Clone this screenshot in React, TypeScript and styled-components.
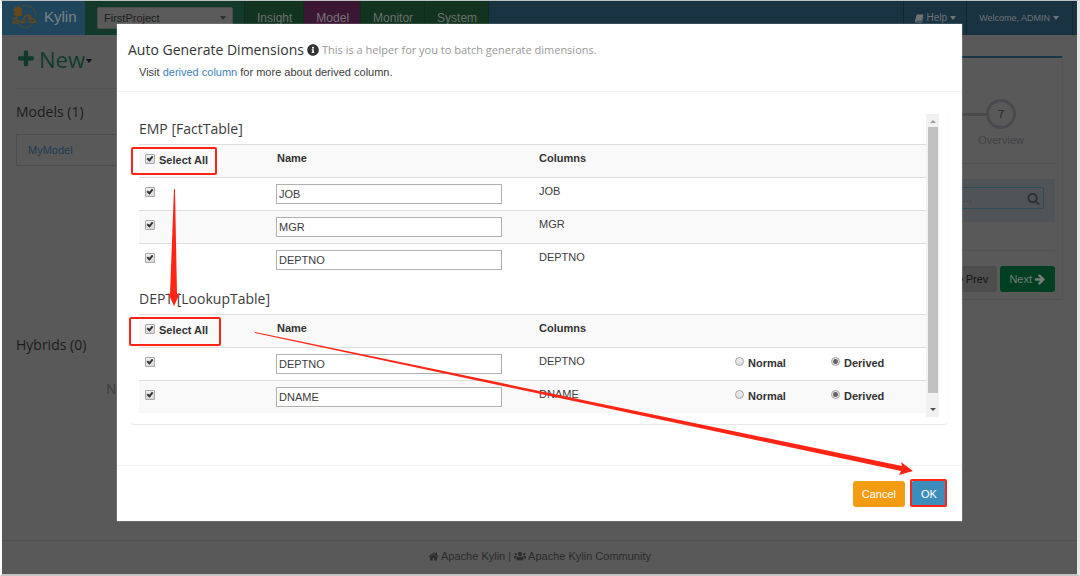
import React from 'react';
import styled, { createGlobalStyle, css } from 'styled-components';
import { FaInfoCircle, FaUsers } from 'react-icons/fa';

const sans = '"Liberation Sans", Arial, sans-serif';
const humanist = '"Open Sans", "Noto Sans", sans-serif';

const GlobalStyle = createGlobalStyle`
  *, *::before, *::after { box-sizing: border-box; }
  html, body { margin: 0; background: #f4f4f4; }
  body { font: 11px/16px ${sans}; color: #3c3c3c; overflow: hidden; }
  button, input, select { font: inherit; margin: 0; }
  h1, h2, p { margin: 0; font-weight: normal; }
  a { text-decoration: none; color: inherit; }
  svg { display: block; flex: none; }
`;

const Page = styled.div`
  display: flex;
  flex-direction: column;
  min-height: 100vh;
  border: solid #fff;
  border-width: 1px 3px 2px 2px;
  border-top-color: #bcc2c2;
  border-bottom-color: #c4c4c4;
  border-right-color: #e6e6e6;
  background: #595959;
`;

const TopBar = styled.header`
  display: flex;
  height: 34px;
  background: #1a3342;
  color: #6f7473;
`;

const Brand = styled.a`
  display: flex;
  align-items: center;
  gap: 6px;
  width: 83px;
  padding: 0 0 2px 9px;
  background: #1f465d;
  color: #7c8285;
  font-size: 15px;
`;

const ProjectArea = styled.div`
  display: flex;
  align-items: center;
  width: 160px;
  padding: 0 11px 0 12px;
  background: #12392a;
  border-right: 1px solid #0e2c20;
`;

const ProjectPicker = styled.div`
  position: relative;
  flex: 1;
`;

const ProjectSelect = styled.select`
  appearance: none;
  display: block;
  width: 100%;
  height: 22px;
  padding: 0 20px 0 6px;
  border: 1px solid #4a4f4c;
  border-radius: 2px;
  background: #5a5a5a;
  color: #1d1d1d;
`;

const Caret = styled.span`
  width: 6px;
  border: 3px solid transparent;
  border-top: 4px solid currentColor;
  border-bottom: 0;

  ${ProjectPicker} & {
    position: absolute;
    right: 7px;
    top: 9px;
    color: #303030;
    pointer-events: none;
  }
`;

const Tab = styled.a<{ $active?: boolean }>`
  display: flex;
  align-items: center;
  padding: 0 11px 0 12px;
  border-right: 1px solid #0f2d1e;
  background: ${(p) => (p.$active ? '#3a1733' : '#12331f')};
  color: ${(p) => (p.$active ? '#7a757a' : '#6b716e')};
  font-size: 12px;
`;

const UserMenu = styled.nav`
  display: flex;
  margin-left: auto;
  padding-right: 4px;
`;

const UserLink = styled.a`
  display: flex;
  align-items: center;
  gap: 3px;
  padding: 0 10px;
  border-left: 1px solid #122632;
  color: #6f7477;
  font-size: 10px;

  &:last-child {
    padding: 0 13px 0 12px;
    border-right: 1px solid #122632;
    font-size: 9px;
  }
`;

const Main = styled.main`
  display: flex;
  flex: 1;
  gap: 16px;
  padding: 0 14px;
`;

const Sidebar = styled.aside`
  width: 246px;
`;

const NewButton = styled.button`
  display: flex;
  align-items: center;
  gap: 3px;
  width: 100%;
  height: 54px;
  padding: 0 0 6px;
  border: 0;
  border-bottom: 1px solid #535353;
  background: none;
  color: #103b2a;
  font: 22px/30px ${humanist};

  ${Caret} { margin: 5px 0 0 -2px; color: #111; }
`;

const SideTitle = styled.h2`
  padding: 13px 0 12px;
  color: #1c1c1c;
  font: 14px/20px ${humanist};
`;

const ModelList = styled.div`
  min-height: 233px;
`;

const ModelLink = styled.a`
  display: block;
  padding: 7px 11px;
  border: 1px solid #4d4d4d;
  color: #1e3b52;
`;

const EmptyNote = styled.p`
  padding-top: 14px;
  text-align: center;
  color: #404040;
  font-size: 14px;
`;

const Card = styled.section`
  flex: 1;
  align-self: flex-start;
  margin-top: 21px;
  padding: 0 7px 7px;
  border-top: 2px solid #173748;
  border-right: 1px solid #545454;
  border-bottom: 1px solid #525252;
  border-radius: 2px;
`;

const Steps = styled.div`
  display: flex;
  justify-content: flex-end;
  height: 106px;
  padding: 41px 31px 0 0;
  border-bottom: 1px solid #525252;
`;

const StepLine = styled.div`
  flex: 1;
  height: 3px;
  margin: 14px -9px 0 0;
  background: #494a4c;
`;

const Step = styled.div`
  display: flex;
  flex-direction: column;
  align-items: center;
  gap: 3px;
  color: #404244;
`;

const StepNumber = styled.span`
  display: grid;
  place-items: center;
  width: 30px;
  height: 30px;
  border: 3px solid #484a4d;
  border-radius: 50%;
  color: #222;
`;

const FilterBar = styled.div`
  display: flex;
  justify-content: flex-end;
  margin: 15px 0 28px;
  padding: 8px 11px 13px;
  background: #515457;
`;

const SearchField = styled.label`
  display: flex;
  align-items: center;
  justify-content: space-between;
  width: 114px;
  height: 22px;
  padding: 0 3px 0 4px;
  border: 1px solid #2c4c5c;
  border-radius: 2px;
  color: #303030;

  input {
    width: 50px;
    padding: 0;
    border: 0;
    background: none;
  }
  input::placeholder { color: #3c3c3c; }
`;

const StepActions = styled.div`
  display: flex;
  justify-content: flex-end;
  gap: 3px;
  padding-top: 15px;
  border-top: 1px solid #525252;
`;

const Button = styled.button<{ $tone: 'plain' | 'next' | 'warning' | 'primary' }>`
  display: flex;
  align-items: center;
  justify-content: center;
  gap: 2px;
  min-width: 36px;
  height: 26px;
  padding: 0 9px;
  border: 0;
  border-radius: 3px;
  ${(p) =>
    ({
      plain: css`background: #4d4d4d; color: #141414;`,
      next: css`background: #003f22; color: #747d78;`,
      warning: css`background: #f39c12; color: #fff;`,
      primary: css`background: #3c8dbc; color: #fff;`,
    })[p.$tone]}
`;

const PageFooter = styled.footer`
  display: flex;
  justify-content: center;
  gap: 3px;
  height: 34px;
  padding-top: 7px;
  border-top: 1px solid #505050;
  color: #2c2c2c;

  a { display: flex; align-items: center; gap: 2px; }
  a, span { height: 16px; }
`;

const ModalLayer = styled.div`
  position: absolute;
  inset: 0;
  display: flex;
  justify-content: center;
  align-items: flex-start;
  padding-top: 24px;
`;

const Dialog = styled.div`
  position: relative;
  width: 845px;
  max-width: 100%;
  margin-right: 1px;
  background: #fff;
  box-shadow: 0 0 1px #ddd;
`;

const DialogHeader = styled.header`
  padding: 16px 11px 11px;
  border-bottom: 1px solid #f2f2f2;
`;

const DialogTitle = styled.h1`
  display: flex;
  align-items: center;
  gap: 3px;
  color: #333;
  font: 14px/20px ${humanist};

  small { color: #999; font-size: 11px; }
`;

const Hint = styled.p`
  padding: 4px 11px 0;

  a { color: #3d82bd; }
`;

const DialogBody = styled.div`
  padding: 15px 15px 41px 14px;
`;

const Panel = styled.div`
  padding: 7px 8px;
  border-radius: 3px;
  box-shadow: 0 1px 1px rgba(0, 0, 0, 0.1);
`;

const Scroller = styled.div`
  display: flex;
  height: 303px;
`;

const ScrollContent = styled.div`
  flex: 1;
  overflow: hidden;
`;

const ScrollBar = styled.div`
  display: flex;
  flex-direction: column;
  align-items: center;
  width: 13px;
  background: #f1f1f1;
`;

const ScrollArrow = styled.span<{ $down?: boolean }>`
  margin: ${(p) => (p.$down ? '15px 0 0' : '6px 0 4px')};
  border: 3px solid transparent;
  ${(p) => (p.$down ? 'border-top-color: #505050; border-bottom: 0;' : 'border-bottom-color: #a0a0a0; border-top: 0;')}
`;

const ScrollThumb = styled.div`
  width: 10px;
  height: 266px;
  background: #c1c1c1;
`;

const TableTitle = styled.h2`
  height: 30px;
  padding-top: 5px;
  font: 14px/20px ${humanist};

  table + & { height: 38px; padding-top: 13px; }
`;

const DimensionTable = styled.table`
  width: 100%;
  border-collapse: separate;
  border-spacing: 0;
  table-layout: fixed;

  th, td {
    height: 33px;
    padding: 5px;
    border-top: 1px solid #ddd;
    text-align: left;
    vertical-align: top;
  }
  th { color: #333; }
  tr:nth-child(odd) > * { background: #f9f9f9; }
`;

const Choice = styled.label`
  display: flex;
  align-items: center;
  gap: 4px;
  height: 18px;
  margin-top: 1px;
  color: #333;
  font-weight: bold;
`;

const CheckBox = styled.input.attrs({ type: 'checkbox' })`
  appearance: none;
  display: block;
  position: relative;
  width: 10px;
  height: 10px;
  margin: 4px 1px;
  border: 1px solid #a8a8a8;
  border-radius: 1px;
  background: linear-gradient(#f0f0f0, #dadada);

  ${Choice} & { margin: 0 0 3px 1px; }

  &:checked::after {
    content: '';
    position: absolute;
    left: 2px;
    top: 0;
    width: 4px;
    height: 6px;
    border: solid #333;
    border-width: 0 2px 2px 0;
    transform: rotate(40deg);
  }
`;

const Radio = styled.input.attrs({ type: 'radio' })`
  appearance: none;
  display: block;
  width: 9px;
  height: 9px;
  border: 1px solid #a5a5a5;
  border-radius: 50%;
  background: linear-gradient(#eee, #ddd);
  ${Choice} & { margin-bottom: 3px; }

  &:checked { background: radial-gradient(circle, #666 0 2px, #e6e6e6 3px); }
`;

const NameInput = styled.input.attrs({ type: 'text' })`
  display: block;
  width: 226px;
  height: 20px;
  margin: 1px 0 0 -1px;
  padding: 0 2px;
  border: 1px solid #b0b0b0;
  background: #fff;
  color: #3c3c3c;
`;

const DialogFooter = styled.footer`
  display: flex;
  justify-content: flex-end;
  gap: 6px;
  padding: 15px 15px 14px;
  border-top: 1px solid #f4f4f4;
`;

const Markup = styled.svg`
  position: absolute;
  left: 0;
  top: 0;
  pointer-events: none;
`;

const glyphs = {
  plus: 'M1600 736v192q0 40-28 68t-68 28h-416v416q0 40-28 68t-68 28h-192q-40 0-68-28t-28-68v-416h-416q-40 0-68-28t-28-68v-192q0-40 28-68t68-28h416v-416q0-40 28-68t68-28h192q40 0 68 28t28 68v416h416q40 0 68 28t28 68z',
  arrow: 'M1600 960q0 54-37 91l-651 651q-39 37-91 37-51 0-90-37l-75-75q-38-38-38-91t38-91l293-293h-704q-52 0-84.5-37.500t-32.500-90.500v-128q0-53 32.500-90.500t84.500-37.500h704l-293-294q-38-36-38-90t38-90l75-75q38-38 90-38 53 0 91 38l651 651q37 35 37 90z',
  search: 'M1216 832q0-185-131.500-316.500t-316.500-131.500-316.500 131.500-131.500 316.500 131.500 316.500 316.500 131.500 316.500-131.500 131.500-316.500zm512 832q0 52-38 90t-90 38q-54 0-90-38l-343-342q-179 124-399 124-143 0-273.500-55.500t-225-150-150-225-55.500-273.500 55.500-273.500 150-225 225-150 273.500-55.500 273.500 55.500 225 150 150 225 55.500 273.500q0 220-124 399l343 343q37 37 37 90z',
  home: 'M1472 992v480q0 26-19 45t-45 19h-384v-384h-256v384h-384q-26 0-45-19t-19-45v-480q0-1 .5-3t.5-3l575-474 575 474q1 2 1 6zm223-69l-62 74q-8 9-21 11h-3q-13 0-21-7l-692-577-692 577q-12 8-24 7-13-2-21-11l-62-74q-8-10-7-23.500t11-21.500l719-599q32-26 76-26t76 26l244 204v-195q0-14 9-23t23-9h192q14 0 23 9t9 23v408l219 182q10 8 11 21.500t-7 23.500z',
  book: 'M560 256h1060q90 0 60 110l-270 960q-20 80-100 80H470q-60 0-60 60t60 60h900q50 0 70-60l220-760q80 30 50 140l-240 760q-30 90-120 90H380q-130 0-190-120-40-80-10-180L470 340q20-84 90-84z',
};

function Glyph({ name, size, flip }: { name: keyof typeof glyphs; size: number; flip?: boolean }) {
  return (
    <svg width={size} height={size} viewBox="0 0 1792 1792" fill="currentColor" aria-hidden="true">
      <path d={glyphs[name]} transform={flip ? 'matrix(-1 0 0 1 1792 0)' : undefined} />
    </svg>
  );
}

function KylinLogo() {
  return (
    <svg width="27" height="26" viewBox="0 0 27 26" fill="none" stroke="#66481d" strokeLinecap="round">
      <path d="M12 1.500C19 0 26 6 24.500 13M22 19C18 25 11 25 8 20" strokeWidth="0.800" />
      <path d="M3 5l2-2 3 0 3 2-1 3 1 3-3 1-3 0-2-2 1-2z" fill="#66481d" strokeWidth="1" />
      <path d="M2 15q2-2 4-1M2 18q3-3 5-1t6-2q1-4 4-4t3 4q3-1 4 2l1 1M10 18q3 1 4 0M17 13q3 1 1 5h6M2 19h5" strokeWidth="1.500" />
    </svg>
  );
}

type Dimension = { name: string; kind?: boolean };

function DimensionGroup({ title, rows }: { title: string; rows: Dimension[] }) {
  return (
    <>
      <TableTitle>{title}</TableTitle>
      <DimensionTable>
        <colgroup>
          <col width="133" />
          <col width="262" />
          <col />
          <col width="96" />
          <col width="100" />
        </colgroup>
        <tbody>
          <tr>
            <th scope="col">
              <Choice>
                <CheckBox defaultChecked />
                Select All
              </Choice>
            </th>
            <th scope="col">Name</th>
            <th scope="col" colSpan={3}>Columns</th>
          </tr>
          {rows.map(({ name, kind }) => (
            <tr key={name}>
              <td><CheckBox defaultChecked aria-label={`Select ${name}`} /></td>
              <td><NameInput defaultValue={name} aria-label={`${name} name`} /></td>
              <td colSpan={kind ? 1 : 3}>{name}</td>
              {kind && (
                <>
                  <td>
                    <Choice><Radio name={`${title}-${name}`} />Normal</Choice>
                  </td>
                  <td>
                    <Choice><Radio name={`${title}-${name}`} defaultChecked />Derived</Choice>
                  </td>
                </>
              )}
            </tr>
          ))}
        </tbody>
      </DimensionTable>
    </>
  );
}

function GenerateDialog() {
  return (
    <Dialog role="dialog" aria-labelledby="dialog-title">
      <DialogHeader>
        <DialogTitle id="dialog-title">
          Auto Generate Dimensions
          <FaInfoCircle size={12} />
          <small>This is a helper for you to batch generate dimensions.</small>
        </DialogTitle>
        <Hint>
          Visit <a href="#derived">derived column</a> for more about derived column.
        </Hint>
      </DialogHeader>
      <DialogBody>
        <Panel>
          <Scroller>
            <ScrollContent>
              <DimensionGroup
                title="EMP [FactTable]"
                rows={[{ name: 'JOB' }, { name: 'MGR' }, { name: 'DEPTNO' }]}
              />
              <DimensionGroup
                title="DEPT [LookupTable]"
                rows={[{ name: 'DEPTNO', kind: true }, { name: 'DNAME', kind: true }]}
              />
            </ScrollContent>
            <ScrollBar>
              <ScrollArrow />
              <ScrollThumb />
              <ScrollArrow $down />
            </ScrollBar>
          </Scroller>
        </Panel>
      </DialogBody>
      <DialogFooter>
        <Button $tone="warning" type="button">Cancel</Button>
        <Button $tone="primary" type="button">OK</Button>
      </DialogFooter>
      <Markup width="845" height="497" viewBox="117 24 845 497" fill="none" aria-hidden="true">
        <g stroke="#ff2414" strokeWidth="2">
          <rect x="132" y="148" width="84" height="26" rx="1" />
          <rect x="130" y="318" width="90" height="27" rx="1" />
          <rect x="911" y="480" width="35" height="26" rx="1" />
        </g>
        <g fill="#ff2414">
          <path d="M174 189h1l2 105 3-1-6 13-6-13 2 1z" />
          <path d="M255 332L902 466L901 462L913 471L899 475L901 471L255 333z" />
        </g>
      </Markup>
    </Dialog>
  );
}

export default function App() {
  return (
    <>
      <GlobalStyle />
      <Page>
        <TopBar>
          <Brand href="#home"><KylinLogo />Kylin</Brand>
          <ProjectArea>
            <ProjectPicker>
              <ProjectSelect aria-label="Project">
                <option>FirstProject</option>
              </ProjectSelect>
              <Caret />
            </ProjectPicker>
          </ProjectArea>
          <Tab href="#insight">Insight</Tab>
          <Tab href="#model" $active>Model</Tab>
          <Tab href="#monitor">Monitor</Tab>
          <Tab href="#system">System</Tab>
          <UserMenu>
            <UserLink href="#help"><Glyph name="book" size={10} />Help<Caret /></UserLink>
            <UserLink href="#account">Welcome, ADMIN<Caret /></UserLink>
          </UserMenu>
        </TopBar>
        <Main>
          <Sidebar>
            <NewButton type="button"><Glyph name="plus" size={20} />New<Caret /></NewButton>
            <ModelList>
              <SideTitle>Models (1)</SideTitle>
              <ModelLink href="#mymodel">MyModel</ModelLink>
            </ModelList>
            <SideTitle>Hybrids (0)</SideTitle>
            <EmptyNote>No Result.</EmptyNote>
          </Sidebar>
          <Card>
            <Steps>
              <StepLine />
              <Step><StepNumber>7</StepNumber>Overview</Step>
            </Steps>
            <FilterBar>
              <SearchField>
                <input type="text" placeholder="Filter ..." aria-label="Filter" />
                <Glyph name="search" size={13} />
              </SearchField>
            </FilterBar>
            <StepActions>
              <Button $tone="plain" type="button"><Glyph name="arrow" size={12} flip />Prev</Button>
              <Button $tone="next" type="button">Next<Glyph name="arrow" size={12} /></Button>
            </StepActions>
          </Card>
        </Main>
        <PageFooter>
          <a href="#kylin"><Glyph name="home" size={11} />Apache Kylin</a>
          <span>|</span>
          <a href="#community"><FaUsers size={12} />Apache Kylin Community</a>
        </PageFooter>
      </Page>
      <ModalLayer><GenerateDialog /></ModalLayer>
    </>
  );
}
